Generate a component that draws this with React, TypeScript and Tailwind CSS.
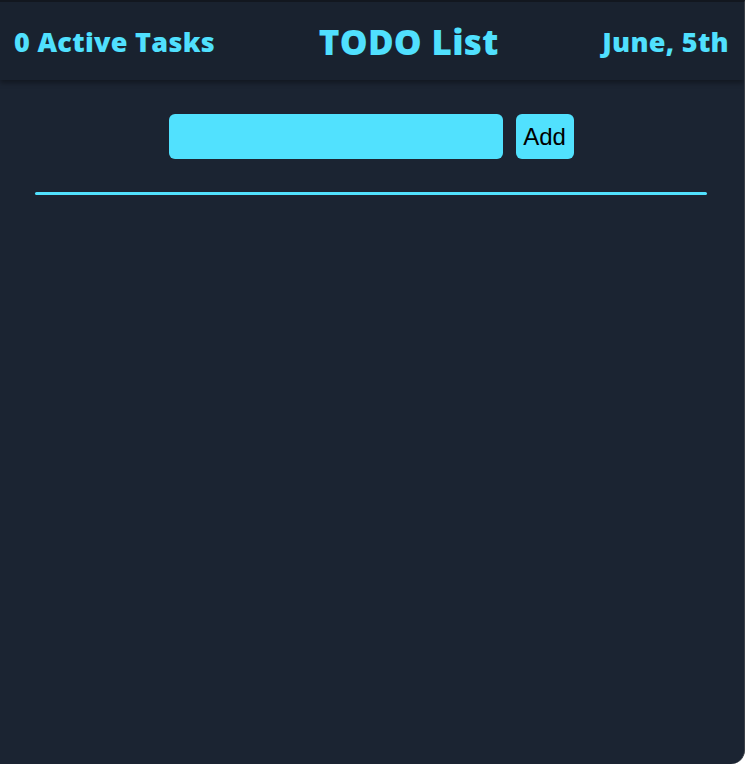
import React from "react";

export default function App() {
  return (
    <div className="h-[764px] w-[745px] overflow-hidden bg-[#1b2432] border-t-2 border-t-[#12171f] border-r border-r-[#3a3f47] rounded-br-[14px] flex flex-col">
      <header className="h-[78px] shrink-0 bg-[#19222f] shadow-[0_3px_5px_rgba(0,0,0,0.35)] flex items-center justify-between pl-[14px] pr-[15px] text-[#50e0fe] font-['Open_Sans',sans-serif] font-extrabold">
        <span className="text-[27px] leading-none tracking-[0.3px]">0 Active Tasks</span>
        <span className="text-[35px] leading-none tracking-[0.3px]">TODO List</span>
        <span className="text-[27px] leading-none tracking-[0.3px]">June, 5th</span>
      </header>
      <main className="flex flex-col items-center pt-[34px] pr-[2px]">
        <div className="flex items-center gap-[13px]">
          <input className="w-[334px] h-[45px] rounded-[6px] bg-[#51e1fe] outline-none border-0 px-2" />
          <button className="w-[58px] h-[45px] rounded-[6px] bg-[#51e1fe] text-black text-[24px] leading-none font-['Liberation_Sans',sans-serif]">Add</button>
        </div>
        <div className="mt-[33px] w-[672px] h-[3px] rounded-full bg-[#51e1fe]" />
      </main>
    </div>
  );
}
